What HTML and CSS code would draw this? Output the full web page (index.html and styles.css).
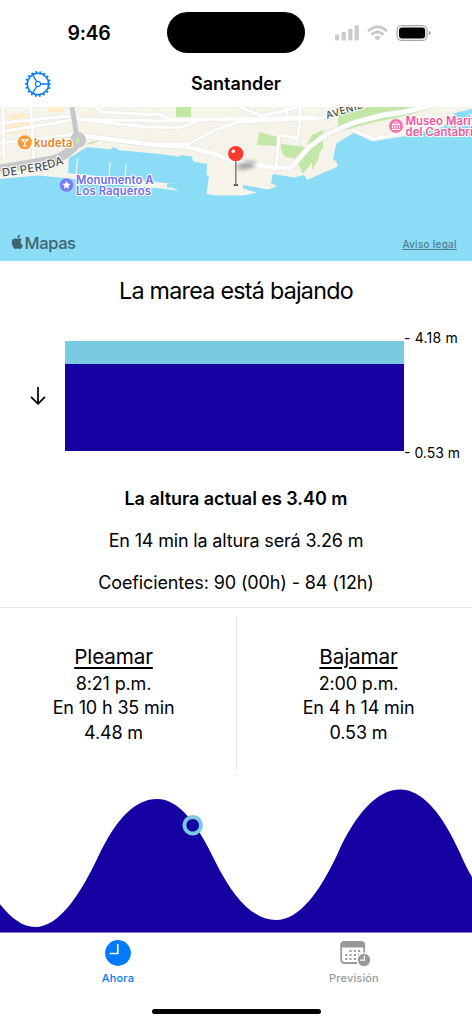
FILE: index.html
```
<!DOCTYPE html>
<html lang="es">
<head>
<meta charset="utf-8">
<title>Santander</title>
<link rel="stylesheet" href="styles.css">
</head>
<body>

<div class="status">
<span class="time">9:46</span>
<span class="island"></span>
<svg class="signals" width="100" height="20" viewBox="334 22 100 20">
<g fill="#cbcbcb">
<rect x="335" y="33.5" width="4.2" height="6" rx="1"/>
<rect x="341.6" y="31" width="4.2" height="8.5" rx="1"/>
<rect x="348.2" y="27.7" width="4.2" height="11.8" rx="1"/>
<rect x="354.6" y="24.3" width="4.2" height="15.2" rx="1"/>
<path d="M377.5 39.5l-3.4-3.3q3.4-2.6 6.8 0z"/>
</g>
<g fill="none" stroke="#cbcbcb" stroke-width="2.8">
<path d="M371.3 33.6q6.2-5.2 12.4 0"/>
<path d="M368.1 30.1q9.4-8.6 18.8 0"/>
</g>
<rect x="397.1" y="24.6" width="30" height="14.8" rx="4.6" fill="none" stroke="#a6a6a6" stroke-width="1.2"/>
<rect x="399" y="26.5" width="26.2" height="11" rx="3" fill="#000"/>
<path d="M428.8 29.8q2 .6 2 2.2t-2 2.2z" fill="#999"/>
</svg>
</div>

<div class="navbar">
<svg class="gear" width="28" height="28" viewBox="-14 -14 28 28" fill="none" stroke="#007aff">
<circle r="10.7" stroke-width="1.5"/>
<circle r="12" stroke-width="1.9" stroke-dasharray="1.7 2.488" stroke-dashoffset=".85"/>
<circle r="2.6" stroke-width="1.2"/>
<path d="M2.6 0H10.5M-1.3-2.3l-4.1-7M-1.3 2.3l-4.1 7" stroke-width="1.3"/>
</svg>
<h1 class="title">Santander</h1>
</div>

<svg class="map" width="472" height="154" viewBox="0 107 472 154">
<defs>
<filter id="soft" x="-50%" y="-80%" width="200%" height="260%"><feGaussianBlur stdDeviation="2.2"/></filter>
</defs>
<rect y="107" width="472" height="155" fill="#8bdcf7"/>

<!-- land -->
<path fill="#f6f3eb" d="M0 107V179L38 175.5 65 178 140 187 160 188.500 179 190.700 172 187.500 167 187.500V183.500L176 184 156 182 68 173 69 158 87 147 111 149.500 112 147.500 117 148 117 150 160 154 179 156.500 181 155 192 156.500 193 161.500 207 164 206.500 175 209 176 206.500 194 216 195.500H244L257 192.500 243 188.500V185L268 189.500 277 186.500 271 183 273 174 294 177.500 304 175 307 180 316 176 338 166.500 336 161 333 160 335 149 337 143 354 133 372 141.500 409 135.500 443 127 455 113 472 109V107Z"/>
<g stroke="#f6f3eb" stroke-width="1.2">
<path d="M77.500 158.500L76 175M110 162.500L109 178M126 164.500L125 180" fill="none"/>
</g>

<!-- blocks and parks -->
<path fill="#ffecc9" d="M10 115l18-2 1 11-18 3zM1 126l27-2v8l-27 3zM0 155h2v7h-2zM48 107h15v5H48z"/>
<g fill="#c2e7a6">
<path d="M176 107h15v10h-15zM259 132l18 5v9l-20-1zM281 144l25 3 6-12 11-5v18l-20 26-7-15-10-2q-6-3-5-15zM312 137l26-11v-19h96q-27 10-59 15l-37 10-16 8-4 20-6 10z"/>
<path d="M327 107h11l-3 12-6 4-17 9v-20z" fill="#f6f3eb"/>
</g>

<!-- street casings -->
<g class="casing">
<path d="M0 123L70 116M0 143l76-9M0 132l72-12M31 107l3 56M3 107l1 53M76 119l82 2 78-2 80-2M76 119l24 3 56 6"/>
<path d="M193 148l13 3M240 107l22 9 4 5M262 116l36-9M285 107l4 12M300 107v14l-3 21M276 168l3-33 19 3M352 130l22 9 68-15M426 114l3 13M312 119l22-2"/>
<path d="M156 144h32l27-14 23-8 75-3M156 113l14 6h70M156 127l23 1 18-7M96 107l6 5 58 3"/>
<path class="wide" d="M84 136l72 9 32 2 27 7 18 7 43 7h15l18-21 18-13 26-11 30-8q40-4 70-19"/>
</g>
<g class="street">
<path d="M0 123L70 116M0 143l76-9M0 132l72-12M31 107l3 56M3 107l1 53M76 119l82 2 78-2 80-2M76 119l24 3 56 6"/>
<path d="M193 148l13 3M240 107l22 9 4 5M262 116l36-9M285 107l4 12M300 107v14l-3 21M276 168l3-33 19 3M352 130l22 9 68-15M426 114l3 13M312 119l22-2"/>
<path d="M156 144h32l27-14 23-8 75-3M156 113l14 6h70M156 127l23 1 18-7M96 107l6 5 58 3"/>
<path class="wide" d="M84 136l72 9 32 2 27 7 18 7 43 7h15l18-21 18-13 26-11 30-8q40-4 70-19"/>
</g>
<path d="M85 144.500q7-4 14-3.500-6 3.500-14 3.500z" fill="#c2e7a6"/>
<g class="avenue">
<path d="M72 107l5 31"/>
<path class="trunk" d="M0 169l53-9q14-4 24-17"/>
<circle cx="78" cy="140" r="5.500"/>
</g>
<ellipse cx="77.500" cy="140.500" rx="2.300" ry="3" fill="#c2e7a6"/>

<!-- labels -->
<text class="road" transform="translate(2.500 176.500) rotate(-7)">DE</text>
<text class="road" transform="translate(20.500 174) rotate(-9)">PERE</text>
<text class="road" transform="translate(48.500 168.500) rotate(-16)">DA</text>
<text class="road small" transform="translate(327 119) rotate(-17)">AVENIDA</text>

<circle cx="24.800" cy="142.300" r="7" fill="#fb9a38"/>
<path d="M21.800 139.700h6l-3 3zM24.800 142v4.200M22.800 146h4" fill="none" stroke="#fff" stroke-width="1.100"/>
<text class="poi food" x="34" y="146.500" textLength="38.500">kudeta</text>

<circle cx="66.500" cy="185" r="6.800" fill="#7a7bf5"/>
<path d="M66.500 180.800l1.200 2.800 3 .3-2.300 2 .7 3-2.600-1.600-2.600 1.600.7-3-2.300-2 3-.3z" fill="#fff"/>
<text class="poi sight" x="76" y="183.500" textLength="77.500">Monumento A</text>
<text class="poi sight" x="76" y="195" textLength="75">Los Raqueros</text>

<circle cx="396" cy="126" r="7" fill="#f873ae"/>
<path d="M392 124.500l4-2.800 4 2.800zM392.500 125.500v3M394.800 125.500v3M397.200 125.500v3M399.500 125.500v3M391.800 129.500h8.400" fill="none" stroke="#fff" stroke-width="1"/>
<text class="poi museum" x="405.500" y="124.500">Museo Marítimo</text>
<text class="poi museum" x="405.500" y="136">del Cantábrico</text>

<!-- pin -->
<ellipse cx="246" cy="165.500" rx="10" ry="3.500" transform="rotate(-12 246 165)" fill="#000" opacity=".35" filter="url(#soft)"/>
<rect x="233.800" y="184" width="4.200" height="2" rx=".5" fill="#555"/>
<path d="M235.800 160v25" stroke="#888" stroke-width="1.600"/>
<circle cx="235.700" cy="153.700" r="7.600" fill="#fd3a2f"/>
<circle cx="233.300" cy="151.300" r="1.700" fill="#fff"/>

<path d="M21.600 239.500c-1-1.200-2.500-1.400-3.700-.8-.6.200-1.100.200-1.700 0-3.500-1.300-5.100 2-4.100 5.700.8 2.900 2.500 5.300 4.400 4.400.8-.4 1.500-.4 2.300 0 2 .9 3.300-1.300 4.100-3.400-2.700-1.300-2.700-4.500-1.300-5.900zM17.300 238.100c-.2-1.700 1.200-3.300 2.800-3.500.2 1.800-1.200 3.500-2.800 3.500z" fill="#3f6470"/>
<text class="brand" x="24.500" y="249.300" textLength="51.500">Mapas</text>
<text class="legal" x="402.500" y="248" textLength="54">Aviso legal</text>
<path d="M402 249.500h55" stroke="#4d7d8d" stroke-width="1"/>
</svg>

<h2 class="headline">La marea está bajando</h2>

<div class="tide">
<svg class="arrow" width="16" height="20" viewBox="0 0 16 20" fill="none" stroke="#000" stroke-width="1.700" stroke-linecap="round" stroke-linejoin="round">
<path d="M8 1.500v16M1.500 11.300l6.500 6.500 6.500-6.500"/>
</svg>
<div class="tank"><div class="level"></div></div>
<div class="scale"><span class="high">- 4.18 m</span><span class="low">- 0.53 m</span></div>
</div>

<div class="summary">
<p class="current">La altura actual es 3.40 m</p>
<p class="next">En 14 min la altura será 3.26 m</p>
<p class="coef">Coeficientes: 90 (00h) - 84 (12h)</p>
</div>

<div class="tides">
<div class="col">
<h3>Pleamar</h3>
<p class="clock">8:21 p.m.</p>
<p class="left">En 10 h 35 min</p>
<p class="height">4.48 m</p>
</div>
<div class="col">
<h3>Bajamar</h3>
<p class="clock">2:00 p.m.</p>
<p class="left">En 4 h 14 min</p>
<p class="height">0.53 m</p>
</div>
</div>

<svg class="wave" width="472" height="163" viewBox="0 770 472 163">
<path fill="#1500a1" d="M0 904.300C12 919 23 927 35 927C59 927 80 895 98 857C117 817 136 799 157 799C179 799 197 823 216 863C236 903 256 920 276 920C299 920 319 893 337 855C356 812 378 789.500 400 789.500C422 789.500 442 813 460 853Q466 867 472 877V932.500H0Z"/>
<circle cx="192.700" cy="825.300" r="8.300" fill="#1500a1" stroke="#79cae2" stroke-width="4"/>
</svg>

<div class="tabbar">
<div class="tab active">
<svg width="46" height="30" viewBox="0 0 46 30">
<circle cx="23" cy="15" r="12.900" fill="#007aff"/>
<path d="M22.800 6.500v9H15.500" fill="none" stroke="#fff" stroke-width="1.700" stroke-linecap="round" stroke-linejoin="round"/>
</svg>
<span>Ahora</span>
</div>
<div class="tab">
<svg width="46" height="30" viewBox="0 0 46 30">
<rect x="10.200" y="4.200" width="23" height="20.800" rx="3.200" fill="none" stroke="#999" stroke-width="1.800"/>
<path d="M9.300 9.500V7q0-3.700 3.700-3.700h17.400q3.700 0 3.700 3.700v2.500z" fill="#999"/>
<g fill="#999">
<path d="M18.500 12h2v2h-2zM22.800 12h2v2h-2zM27.100 12h2v2h-2zM14.300 16h2v2h-2zM18.500 16h2v2h-2zM22.800 16h2v2h-2zM27.100 16h2v2h-2zM14.300 20h2v2h-2zM18.500 20h2v2h-2zM22.800 20h2v2h-2z"/>
<circle cx="33" cy="22" r="6.900" stroke="#fff" stroke-width="1.400"/>
</g>
<path d="M33.300 18v4.200h-3.600" fill="none" stroke="#fff" stroke-width="1.200" stroke-linecap="round"/>
</svg>
<span>Previsión</span>
</div>
</div>
<div class="home"></div>

</body>
</html>
```
FILE: styles.css
```
/* Tide screen
*/

body
{ margin: 0;
width: 472px;
height: 1024px;
overflow: hidden;
background: #fff;
color: #000;
font-family: Inter, "Liberation Sans", sans-serif;
}

h1, h2, h3, p
{ margin: 0;
font-weight: 400;
}

/* Status and navigation */

.status
{ display: grid;
grid-template-columns: 167px 138px 167px;
align-items: center;
height: 65px;
}

.time
{ padding-left: 11px;
text-align: center;
font-size: 19.5px;
font-weight: 600;
letter-spacing: -0.3px;
}

.island
{ height: 41px;
border-radius: 21px;
background: #000;
}

.signals
{ margin-left: 29px;
}

.navbar
{ display: grid;
grid-template-columns: 75px 1fr 75px;
align-items: center;
height: 37px;
padding-bottom: 5px;
}

.gear
{ margin-left: 23.5px;
}

.title
{ text-align: center;
font-size: 18px;
font-weight: 600;
letter-spacing: 0;
}

/* Map */

.map
{ display: block;
}

.casing
{ fill: none;
stroke: #e5e4e2;
stroke-width: 4.2;
stroke-linejoin: round;
}

.casing .wide
{ stroke-width: 5.8;
}

.street
{ fill: none;
stroke: #fff;
stroke-width: 3;
stroke-linejoin: round;
}

.street .wide
{ stroke-width: 4.6;
}

.avenue
{ fill: #c5c7cb;
stroke: #c5c7cb;
stroke-width: 5;
}

.avenue path
{ fill: none;
}

.avenue .trunk
{ stroke-width: 9;
}

.road
{ fill: #4d4d4d;
stroke: #fff;
stroke-width: 2px;
paint-order: stroke;
font-size: 11.3px;
font-weight: 500;
letter-spacing: 0.4px;
}

.road.small
{ font-size: 10px;
}

.poi
{ stroke: #fff;
stroke-width: 2px;
paint-order: stroke;
stroke-linejoin: round;
font-size: 11.3px;
font-weight: 600;
}

.food
{ fill: #ee8127;
}

.sight
{ fill: #6d6df0;
}

.museum
{ fill: #f0579c;
letter-spacing: 0.1px;
}

.brand
{ fill: #3f6470;
font-size: 16.5px;
font-weight: 500;
}

.legal
{ fill: #4d7d8d;
font-size: 9.8px;
font-weight: 500;
}

/* Tide level */

.headline
{ padding-top: 15px;
text-align: center;
font-size: 23.3px;
line-height: 30px;
letter-spacing: -0.75px;
}

.tide
{ display: grid;
grid-template-columns: 65px 339px 68px;
margin-top: 34.5px;
height: 110px;
}

.arrow
{ align-self: center;
margin-left: 30px;
}

.tank
{ display: flex;
align-items: flex-end;
background: #79cae2;
}

.level
{ width: 100%;
height: 79%;
background: #1500a1;
}

.scale
{ display: flex;
flex-direction: column;
justify-content: space-between;
margin: -12px 0 -11px;
font-size: 14px;
line-height: 18px;
letter-spacing: 0.2px;
white-space: nowrap;
}

.scale .low
{ letter-spacing: 0;
}

/* Summary lines */

.summary
{ height: 156px;
border-bottom: 1px solid #e4e4e4;
text-align: center;
font-size: 18px;
line-height: 42px;
}

.current
{ padding-top: 27.5px;
font-weight: 600;
letter-spacing: -0.03px;
}

.next
{ letter-spacing: -0.17px;
}

.coef
{ letter-spacing: -0.12px;
}

/* High and low water */

.tides
{ display: grid;
grid-template-columns: 1fr 1fr;
height: 153px;
padding-top: 9px;
}

.col
{ padding-top: 25px;
text-align: center;
font-size: 18px;
line-height: 24.5px;
letter-spacing: -0.15px;
}

.col:first-child
{ width: 227px;
padding-right: 9px;
border-right: 1px solid #e4e4e4;
}

.col:last-child
{ padding-left: 8px;
}

.col h3
{ font-size: 20.7px;
line-height: 30px;
text-decoration: underline;
text-underline-offset: 3px;
text-decoration-thickness: 1.5px;
}

.wave
{ display: block;
}

/* Tab bar */

.tabbar
{ display: grid;
grid-template-columns: 1fr 1fr;
height: 71px;
padding-top: 5px;
}

.tab
{ display: flex;
flex-direction: column;
align-items: center;
color: #999;
font-size: 11px;
font-weight: 500;
letter-spacing: 0.15px;
}

.tab svg
{ margin-bottom: 3px;
}

.active
{ color: #007aff;
}

.home
{ width: 169px;
height: 5.5px;
margin: 0 auto;
border-radius: 3px;
background: #000;
}
```
